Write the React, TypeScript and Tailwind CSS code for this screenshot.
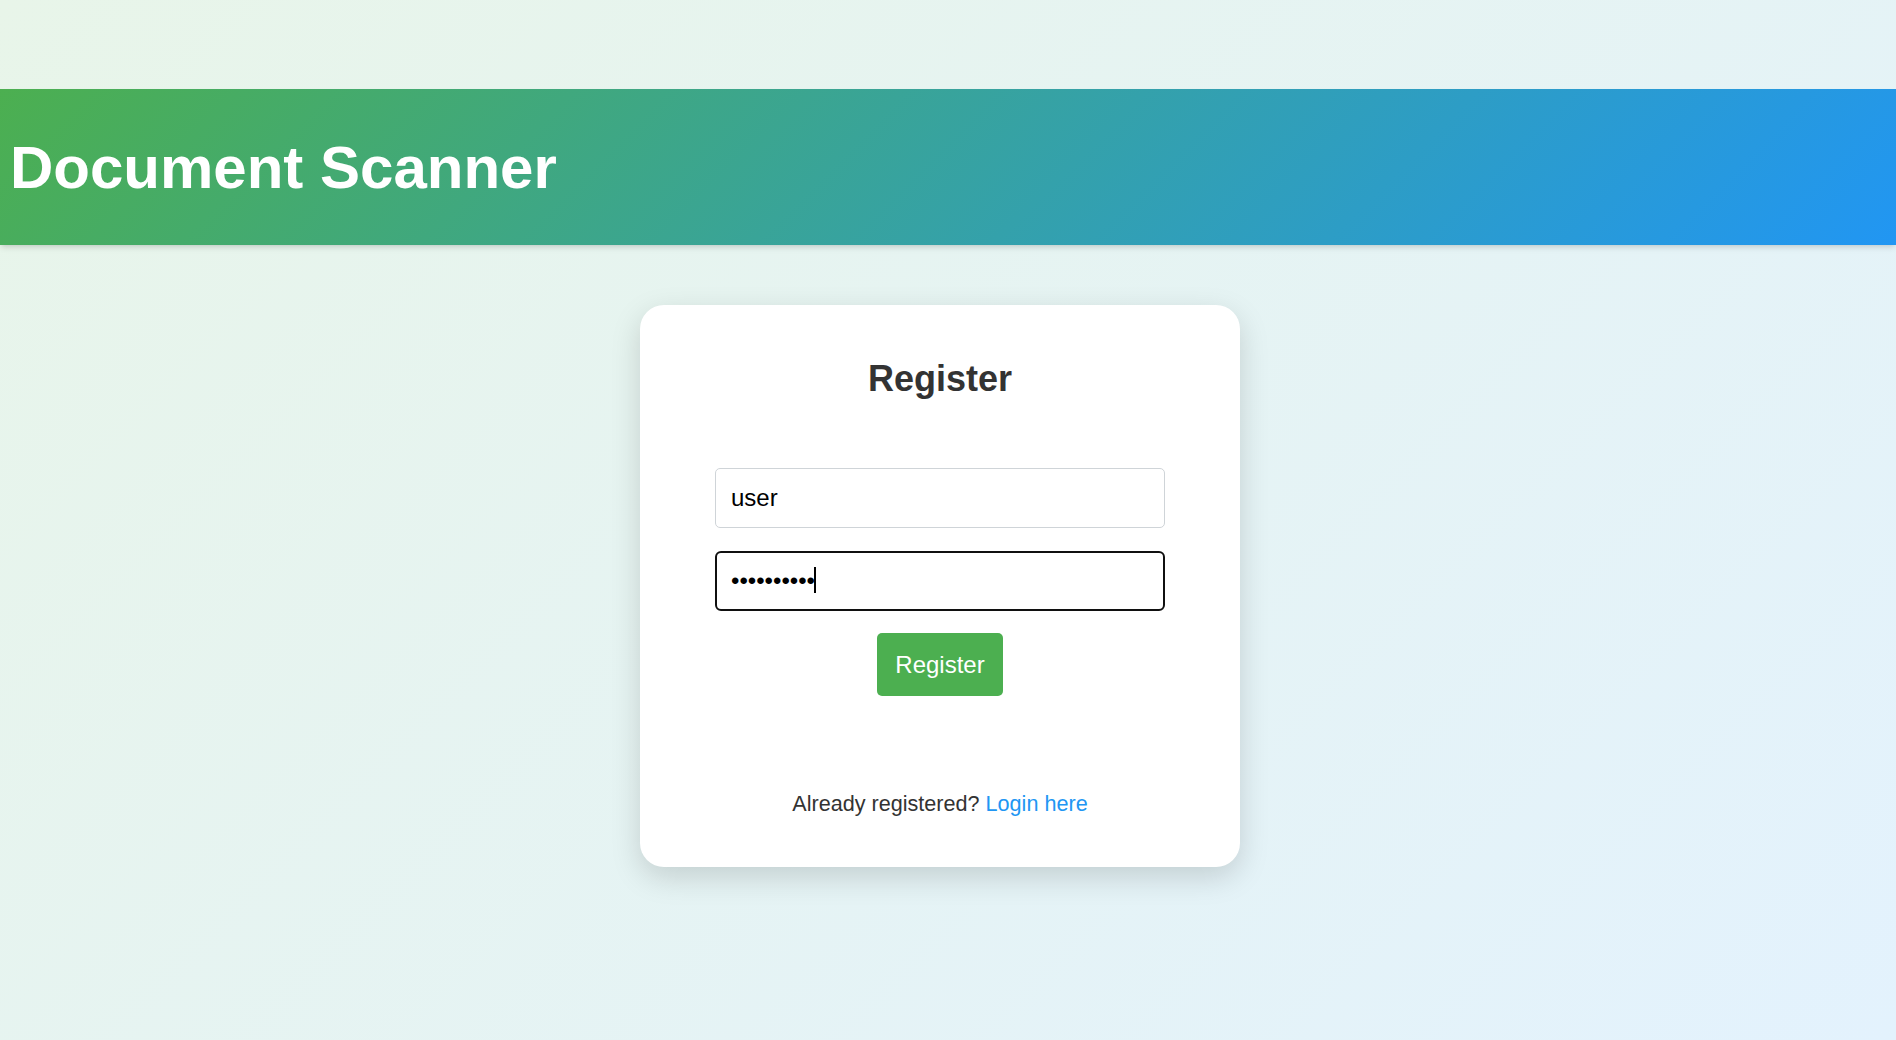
export default function App() {
    return (
        <div className="min-h-screen bg-[linear-gradient(135deg,#e8f5e9,#e3f2fd)] pt-[89px] font-['Liberation_Sans',Arial,sans-serif]">
            <header className="h-[156px] flex items-center pl-[10px] bg-[linear-gradient(135deg,#4caf50,#2196f3)] shadow-md">
                <h1 className="text-6xl/[69px] font-bold text-white">Document Scanner</h1>
            </header>
            <div className="flex justify-center pr-4 pt-[60px]">
                <div className="w-[600px] h-[562px] bg-white rounded-3xl shadow-[0_10px_30px_rgba(0,0,0,0.15)] px-[75px] pt-[53px] flex flex-col items-center">
                    <h2 className="text-4xl/[41px] font-bold text-[#333]">Register</h2>
                    <form className="mt-[69px] w-full flex flex-col items-center" onSubmit={(e) => e.preventDefault()}>
                        <input
                            type="text"
                            value="user"
                            readOnly
                            className="w-full h-[60px] border border-[#cfd4d8] rounded-[5px] px-[15px] text-2xl text-black bg-white outline-none"
                        />
                        <div className="relative w-full mt-[23px]">
                            <input
                                type="password"
                                value="secretpass"
                                readOnly
                                className="w-full h-[60px] border-2 border-[#101010] rounded-[6px] px-[14px] text-2xl text-black bg-white outline-none"
                            />
                            <span className="absolute left-[99px] top-[16px] h-[26px] w-[2px] bg-black" />
                        </div>
                        <button type="submit" className="mt-[22px] h-[63px] px-[18px] bg-[#4caf50] text-white text-2xl rounded-[5px]">
                            Register
                        </button>
                    </form>
                    <p className="mt-[95px] text-[21.6px]/[25px] text-[#333]">
                        Already registered? <a href="#" className="text-[#2196f3]">Login here</a>
                    </p>
                </div>
            </div>
        </div>
    );
}
